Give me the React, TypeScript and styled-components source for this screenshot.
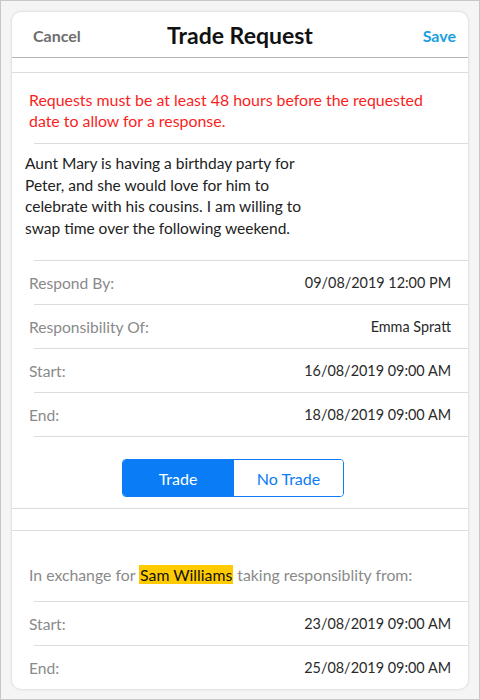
import React from "react";
import styled, { createGlobalStyle } from "styled-components";

const Global = createGlobalStyle`
  html, body { margin: 0; padding: 0; }
  body { font-family: Lato, "Noto Sans", sans-serif; -webkit-font-smoothing: antialiased; }
  * { box-sizing: border-box; }
`;

const Page = styled.div`
  width: 480px;
  height: 700px;
  border: 1px solid #c8c8c8;
  background: #f5f5f5;
  padding: 11px 11px 0 11px;
  overflow: hidden;
`;

const Card = styled.div`
  background: #fff;
  border-radius: 9px;
  box-shadow: 0 0 3px rgba(0, 0, 0, 0.18);
  height: 677px;
  display: flex;
  flex-direction: column;
  overflow: hidden;
`;

const Header = styled.div`
  height: 46px;
  display: grid;
  grid-template-columns: 1fr auto 1fr;
  align-items: center;
  padding: 0 12px;
  border-bottom: 1px solid #b4b4b4;
  flex-shrink: 0;
`;

const NavButton = styled.span<{ $primary?: boolean; $right?: boolean }>`
  font-size: 16px;
  font-weight: 700;
  color: ${(p) => (p.$primary ? "#1a9fe0" : "#6e6e6e")};
  justify-self: ${(p) => (p.$right ? "end" : "start")};
  padding-top: 1px;
  padding-left: ${(p) => (p.$right ? "0" : "9px")};
`;

const Title = styled.h1`
  margin: 0;
  font-size: 23px;
  font-weight: 700;
  color: #111;
`;

const Spacer = styled.div<{ $h: number }>`
  height: ${(p) => p.$h}px;
  border-bottom: 1px solid #dcdcdc;
  flex-shrink: 0;
`;

const Warning = styled.div`
  color: #fa1e1e;
  font-size: 15.9px;
  line-height: 21px;
  padding: 16px 40px 12px 17px;
`;

const Divider = styled.div`
  height: 1px;
  background: #dcdcdc;
  margin-left: 22px;
  flex-shrink: 0;
`;

const Note = styled.p`
  margin: 0;
  padding: 9px 0 21px 13px;
  width: 305px;
  font-size: 15.5px;
  line-height: 21.5px;
  color: #222;
`;

const Row = styled.div`
  height: 43px;
  display: flex;
  align-items: center;
  justify-content: space-between;
  padding: 0 17px;
  font-size: 15.6px;
`;

const Label = styled.span`
  color: #8a8a8a;
`;

const Value = styled.span`
  color: #2a2a2a;
  font-size: 14.4px;
`;

const SegmentWrap = styled.div`
  display: flex;
  justify-content: center;
  padding: 22px 14px 11px 0;
`;

const Segmented = styled.div`
  display: flex;
  border: 1px solid #0a7cf6;
  border-radius: 4px;
  overflow: hidden;
  height: 38px;
`;

const Segment = styled.div<{ $active?: boolean }>`
  width: 110px;
  display: flex;
  align-items: center;
  justify-content: center;
  font-size: 16px;
  color: ${(p) => (p.$active ? "#fff" : "#0a7cf6")};
  background: ${(p) => (p.$active ? "#0a7cf6" : "#fff")};
  & + & { border-left: 1px solid #0a7cf6; }
`;

const TopLine = styled.div`
  border-top: 1px solid #dcdcdc;
  height: 22px;
  flex-shrink: 0;
`;

const Exchange = styled.div`
  border-top: 1px solid #dcdcdc;
  padding: 34px 17px 16px 17px;
  font-size: 15.8px;
  color: #8a8a8a;
  line-height: 20px;
`;

const Highlight = styled.span`
  background: #ffcb00;
  color: #111;
  padding: 0 1px;
`;

export default function App() {
  return (
    <>
      <Global />
      <Page>
        <Card>
          <Header>
            <NavButton>Cancel</NavButton>
            <Title>Trade Request</Title>
            <NavButton $primary $right>Save</NavButton>
          </Header>
          <Spacer $h={15} />
          <Warning>
            Requests must be at least 48 hours before the requested date to allow for a response.
          </Warning>
          <Divider />
          <Note>
            Aunt Mary is having a birthday party for Peter, and she would love for him to celebrate with his cousins. I am willing to swap time over the following weekend.
          </Note>
          <Divider />
          <Row><Label>Respond By:</Label><Value>09/08/2019 12:00 PM</Value></Row>
          <Divider />
          <Row><Label>Responsibility Of:</Label><Value>Emma Spratt</Value></Row>
          <Divider />
          <Row><Label>Start:</Label><Value>16/08/2019 09:00 AM</Value></Row>
          <Divider />
          <Row><Label>End:</Label><Value>18/08/2019 09:00 AM</Value></Row>
          <Divider />
          <SegmentWrap>
            <Segmented>
              <Segment $active>Trade</Segment>
              <Segment>No Trade</Segment>
            </Segmented>
          </SegmentWrap>
          <TopLine />
          <Exchange>
            In exchange for <Highlight>Sam Williams</Highlight> taking responsiblity from:
          </Exchange>
          <Divider />
          <Row><Label>Start:</Label><Value>23/08/2019 09:00 AM</Value></Row>
          <Divider />
          <Row><Label>End:</Label><Value>25/08/2019 09:00 AM</Value></Row>
        </Card>
      </Page>
    </>
  );
}
